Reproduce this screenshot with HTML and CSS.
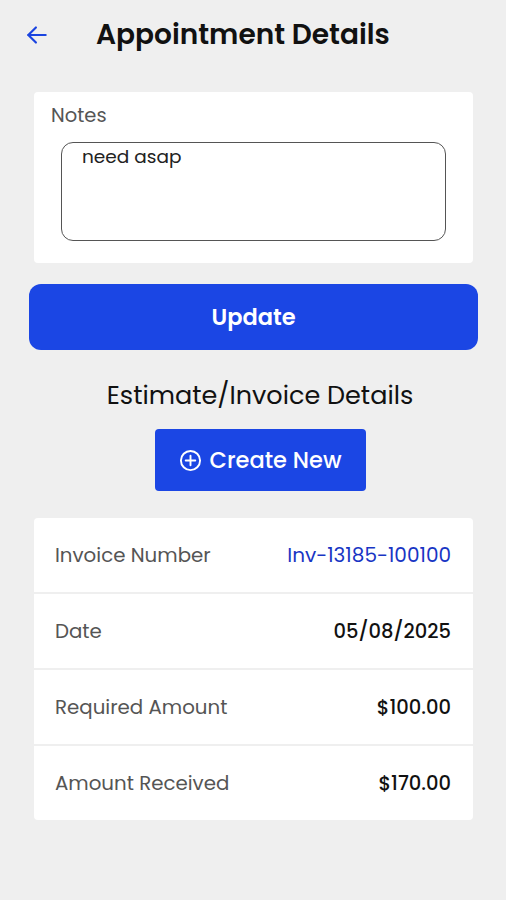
FILE: index.html
```html
<!DOCTYPE html>
<html lang="en">
<head>
  <meta charset="UTF-8" />
  <title>Appointment Details</title>
  <link rel="stylesheet" href="styles.css">
</head>
<body>
  <div class="header">
    <button class="back" aria-label="Back">
      <svg width="26" height="26" viewBox="0 0 24 24" fill="none" stroke="#1a44e0" stroke-width="2" stroke-linecap="round" stroke-linejoin="round">
        <path d="M20 12H4"/>
        <path d="M11 5l-7 7 7 7"/>
      </svg>
    </button>
    <h1>Appointment Details</h1>
  </div>

  <div class="card notes-card">
    <div class="notes-label">Notes</div>
    <div class="notes-box">need asap</div>
  </div>

  <button class="update-btn">Update</button>

  <div class="invoice-head">
    <h2>Estimate/Invoice Details</h2>
    <button class="create-btn">
      <svg width="23" height="23" viewBox="0 0 24 24" fill="none" stroke="white" stroke-width="2" stroke-linecap="round">
        <circle cx="12" cy="12" r="10"/>
        <path d="M12 7v10M7 12h10"/>
      </svg>
      Create New
    </button>
  </div>

  <div class="details">
    <div class="row">
      <span class="label">Invoice Number</span>
      <span class="value link">Inv-13185-100100</span>
    </div>
    <div class="row">
      <span class="label">Date</span>
      <span class="value">05/08/2025</span>
    </div>
    <div class="row">
      <span class="label">Required Amount</span>
      <span class="value">$100.00</span>
    </div>
    <div class="row">
      <span class="label">Amount Received</span>
      <span class="value">$170.00</span>
    </div>
  </div>
</body>
</html>
```

FILE: styles.css
```css
body {
  margin: 0;
  background-color: #efefef;
  font-family: Poppins, "Inter", "Noto Sans", sans-serif;
  color: #111;
}

.header {
  display: flex;
  align-items: center;
  height: 70px;
  padding-left: 24px;
}

.back {
  background: none;
  border: none;
  padding: 0;
  width: 26px;
  height: 26px;
  margin-right: 46px;
  cursor: pointer;
}

h1 {
  margin: 0;
  font-size: 28px;
  font-weight: 600;
  color: #111;
}

.card {
  background: white;
  border-radius: 4px;
  margin: 22px 33px 0 34px;
}

.notes-card {
  padding: 12px 27px 22px 27px;
}

.notes-label {
  font-size: 19.5px;
  color: #555;
  margin-left: -10px;
  line-height: 24px;
}

.notes-box {
  margin-top: 14px;
  height: 99px;
  box-sizing: border-box;
  border: 1.5px solid #555;
  border-radius: 12px;
  padding: 0 20px;
  font-size: 18.5px;
  color: #222;
}

.update-btn {
  display: block;
  width: 449px;
  height: 66px;
  margin: 21px 0 0 29px;
  background: #1b46e4;
  color: white;
  border: none;
  border-radius: 12px;
  font-family: inherit;
  font-size: 22.5px;
  font-weight: 600;
  cursor: pointer;
}

.invoice-head {
  display: flex;
  flex-direction: column;
  align-items: center;
  padding-left: 14px;
}

h2 {
  margin: 29px 0 0 0;
  font-size: 25.5px;
  font-weight: 400;
  line-height: 32px;
}

.create-btn {
  display: flex;
  align-items: center;
  justify-content: center;
  gap: 8px;
  width: 211px;
  height: 62px;
  margin-top: 18px;
  background: #1b46e4;
  color: white;
  border: none;
  border-radius: 4px;
  font-family: inherit;
  font-size: 22.5px;
  font-weight: 500;
  cursor: pointer;
}

.details {
  margin: 27px 33px 0 34px;
  display: flex;
  flex-direction: column;
  gap: 2px;
}

.row {
  background: white;
  height: 74px;
  display: flex;
  align-items: center;
  justify-content: space-between;
  padding: 0 22px 0 21px;
  font-size: 19.8px;
}

.row:first-child {
  border-radius: 4px 4px 0 0;
}

.row:last-child {
  border-radius: 0 0 4px 4px;
}

.label {
  color: #555;
}

.value {
  color: #111;
  font-weight: 500;
  font-size: 19.5px;
}

.value.link {
  color: #1835c4;
  font-weight: 400;
  font-size: 20px;
}
```
